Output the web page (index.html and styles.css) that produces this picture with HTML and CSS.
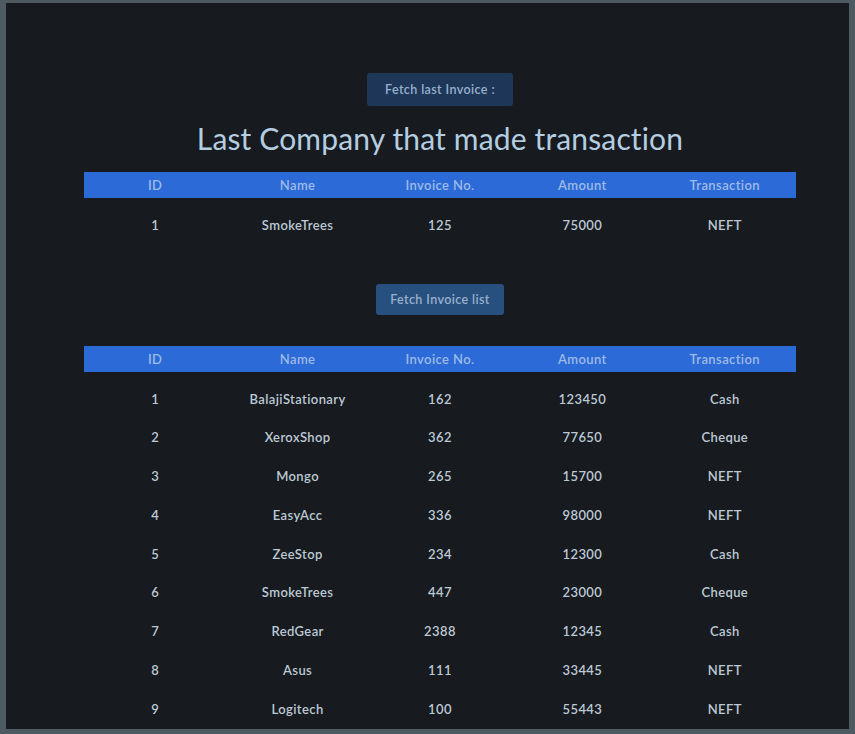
FILE: index.html
```html
<!DOCTYPE html>
<html>
<head>
<meta charset="utf-8">
<link rel="stylesheet" href="styles.css">
</head>
<body>
<div class="frame">
  <div class="content">
    <button class="btn btn-last">Fetch last Invoice :</button>
    <h1 class="title">Last Company that made transaction</h1>
    <div class="table">
      <div class="row head"><div>ID</div><div>Name</div><div>Invoice No.</div><div>Amount</div><div>Transaction</div></div>
      <div class="body">
        <div class="row"><div>1</div><div>SmokeTrees</div><div>125</div><div>75000</div><div>NEFT</div></div>
      </div>
    </div>
    <button class="btn btn-list">Fetch Invoice list</button>
    <div class="table">
      <div class="row head"><div>ID</div><div>Name</div><div>Invoice No.</div><div>Amount</div><div>Transaction</div></div>
      <div class="body">
        <div class="row"><div>1</div><div>BalajiStationary</div><div>162</div><div>123450</div><div>Cash</div></div>
        <div class="row"><div>2</div><div>XeroxShop</div><div>362</div><div>77650</div><div>Cheque</div></div>
        <div class="row"><div>3</div><div>Mongo</div><div>265</div><div>15700</div><div>NEFT</div></div>
        <div class="row"><div>4</div><div>EasyAcc</div><div>336</div><div>98000</div><div>NEFT</div></div>
        <div class="row"><div>5</div><div>ZeeStop</div><div>234</div><div>12300</div><div>Cash</div></div>
        <div class="row"><div>6</div><div>SmokeTrees</div><div>447</div><div>23000</div><div>Cheque</div></div>
        <div class="row"><div>7</div><div>RedGear</div><div>2388</div><div>12345</div><div>Cash</div></div>
        <div class="row"><div>8</div><div>Asus</div><div>111</div><div>33445</div><div>NEFT</div></div>
        <div class="row"><div>9</div><div>Logitech</div><div>100</div><div>55443</div><div>NEFT</div></div>
      </div>
    </div>
  </div>
</div>
</body>
</html>
```
FILE: styles.css
```css
html, body {
  margin: 0;
  padding: 0;
  background: #ffffff;
}
body {
  width: 855px;
  height: 734px;
  overflow: hidden;
  font-family: Lato, "Open Sans", sans-serif;
}
.frame {
  box-sizing: border-box;
  width: 855px;
  height: 734px;
  border-style: solid;
  border-color: #4d5a61;
  border-width: 3px 6px 5px 6px;
  background: #171a1f;
  overflow: hidden;
}
.content {
  width: 712px;
  margin-left: 78px;
  padding-top: 70px;
  display: flex;
  flex-direction: column;
  align-items: center;
}
.btn {
  font-family: Lato, sans-serif;
  font-size: 12.5px;
  font-weight: 600;
  letter-spacing: 0.4px;
  color: #98b0cc;
  border: none;
  border-radius: 3px;
  padding: 0;
  cursor: pointer;
}
.btn-last {
  width: 146px;
  height: 33px;
  background: #1e3759;
}
.btn-list {
  width: 128px;
  height: 31px;
  background: #28507f;
  margin-top: 40px;
}
.title {
  margin: 15px 0 0 0;
  font-weight: 400;
  font-size: 30px;
  letter-spacing: 0.15px;
  line-height: 34px;
  color: #b4cde0;
  text-align: center;
}
.table {
  width: 712px;
  margin-top: 17px;
}
.btn-list + .table {
  margin-top: 31px;
}
.row {
  display: grid;
  grid-template-columns: repeat(5, 1fr);
  height: 38.75px;
  align-items: center;
  text-align: center;
  font-size: 13px;
  font-weight: 600;
  letter-spacing: 0.4px;
  color: #bcc9d4;
  padding-top: 1px;
  box-sizing: border-box;
}
.row.head {
  height: 26px;
  background: #2c6ad8;
  color: #9dbbe6;
  padding-top: 0;
}
.body {
  padding-top: 7px;
}
```
